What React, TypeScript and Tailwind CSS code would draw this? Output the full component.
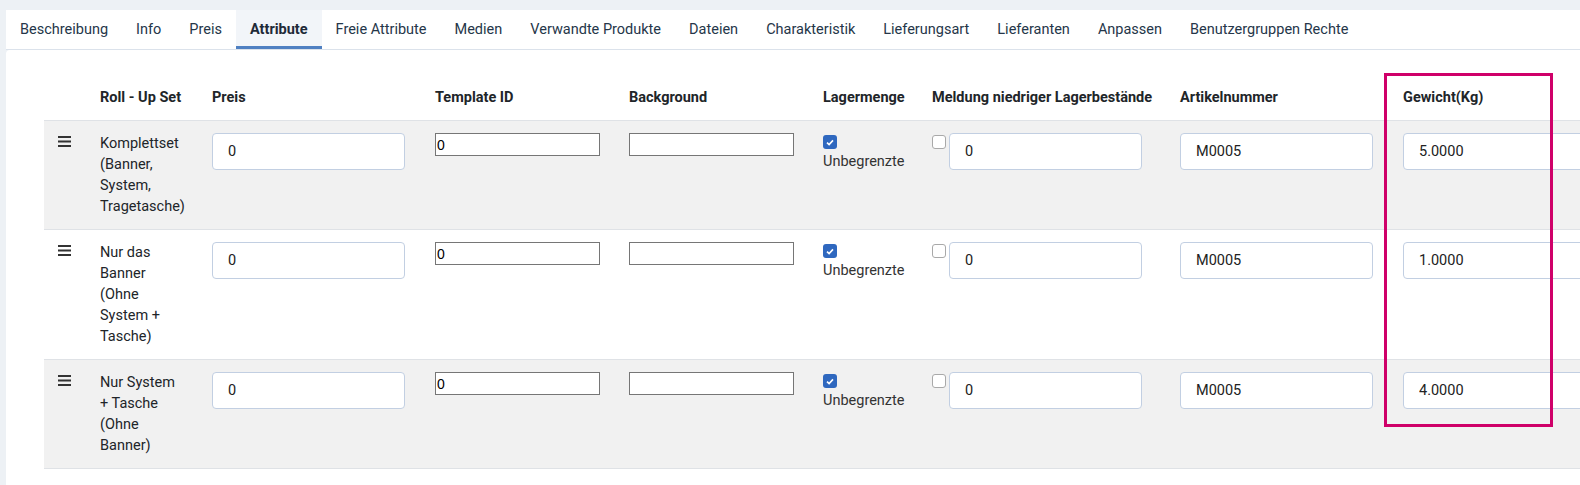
import React from "react";

type Variant = {
  id: number;
  name: string;
  weight: string;
};

const tabs = [
  "Beschreibung",
  "Info",
  "Preis",
  "Attribute",
  "Freie Attribute",
  "Medien",
  "Verwandte Produkte",
  "Dateien",
  "Charakteristik",
  "Lieferungsart",
  "Lieferanten",
  "Anpassen",
  "Benutzergruppen Rechte",
];

const variants: Variant[] = [
  { id: 1, name: "Komplettset (Banner, System, Tragetasche)", weight: "5.0000" },
  { id: 2, name: "Nur das Banner (Ohne System + Tasche)", weight: "1.0000" },
  { id: 3, name: "Nur System + Tasche (Ohne Banner)", weight: "4.0000" },
];

export default function App() {
  return (
    <div className="relative min-h-screen overflow-hidden bg-[#edf1f5] pt-[10px] pl-[6px] font-[Roboto,sans-serif] text-[14.5px] text-[#212529]">
      <nav className="flex h-[40px] w-[1600px] border-b border-[#dbe2eb] bg-white">
        {tabs.map((tab) => (
          <Tab key={tab} label={tab} active={tab === "Attribute"} />
        ))}
      </nav>

      <div className="h-[440px] w-[1640px] rounded-tl-[4px] bg-white pt-[25px] pl-[38px]">
        <table className="w-[1582px] table-fixed border-collapse">
          <colgroup>
            <col className="w-[56px]" />
            <col className="w-[112px]" />
            <col className="w-[223px]" />
            <col className="w-[194px]" />
            <col className="w-[194px]" />
            <col className="w-[109px]" />
            <col className="w-[248px]" />
            <col className="w-[223px]" />
            <col className="w-[223px]" />
          </colgroup>
          <thead>
            <tr className="text-left font-bold leading-[21px]">
              <th className="py-3" />
              <th className="py-3 whitespace-nowrap">Roll - Up Set</th>
              <th className="py-3">Preis</th>
              <th className="py-3">Template ID</th>
              <th className="py-3">Background</th>
              <th className="py-3">Lagermenge</th>
              <th className="py-3 whitespace-nowrap">Meldung niedriger Lagerbestände</th>
              <th className="py-3">Artikelnummer</th>
              <th className="py-3">Gewicht(Kg)</th>
            </tr>
          </thead>
          <tbody>
            {variants.map((v, i) => (
              <VariantRow key={v.id} variant={v} striped={i % 2 === 0} />
            ))}
          </tbody>
        </table>
      </div>

      {/* highlight around the weight column */}
      <div className="pointer-events-none absolute left-[1384px] top-[73px] h-[354px] w-[169px] border-[3px] border-[#cf0069]" />
    </div>
  );
}

function Tab({ label, active }: { label: string; active: boolean }) {
  return (
    <button
      type="button"
      className={`flex h-full items-center px-[14px] text-[14.5px] ${
        active
          ? "border-b-[3px] border-[#4f80c2] bg-[#f2f5f9] pt-[3px] font-bold text-[#1e2a38]"
          : "text-[#253649]"
      }`}
    >
      {label}
    </button>
  );
}

function VariantRow({ variant, striped }: { variant: Variant; striped: boolean }) {
  const cell = "border-y border-[#dfe2e6] py-3 align-top";
  return (
    <tr className={striped ? "bg-[#f1f1f1]" : "bg-white"}>
      <td className={`${cell} pl-[14px]`}>
        <svg width="13" height="11" viewBox="0 0 13 11" className="mt-[3px] text-[#333]">
          <rect x="0" y="0" width="13" height="2" fill="currentColor" />
          <rect x="0" y="4.5" width="13" height="2" fill="currentColor" />
          <rect x="0" y="9" width="13" height="2" fill="currentColor" />
        </svg>
      </td>
      <td className={cell}>
        <div className="w-[84px] leading-[21px]">{variant.name}</div>
      </td>
      <td className={cell}>
        <TextInput value="0" />
      </td>
      <td className={cell}>
        <PlainInput value="0" />
      </td>
      <td className={cell}>
        <PlainInput value="" />
      </td>
      <td className={cell}>
        <Checkbox checked className="mt-[2px]" />
        <div className="mt-[2px] leading-[21px] text-[#333]">Unbegrenzte</div>
      </td>
      <td className={cell}>
        <div className="flex items-start gap-[3px]">
          <Checkbox checked={false} className="mt-[2px]" />
          <TextInput value="0" />
        </div>
      </td>
      <td className={cell}>
        <TextInput value="M0005" />
      </td>
      <td className={cell}>
        <TextInput value={variant.weight} />
      </td>
    </tr>
  );
}

function TextInput({ value }: { value: string }) {
  return (
    <input
      type="text"
      readOnly
      defaultValue={value}
      className="block h-[37px] w-[193px] rounded-[4px] border border-[#c2cfe2] bg-white px-[15px] text-[14.5px] text-[#222] outline-none"
    />
  );
}

function PlainInput({ value }: { value: string }) {
  return (
    <input
      type="text"
      readOnly
      defaultValue={value}
      className="block h-[23px] w-[165px] border border-[#767676] bg-white px-[1px] font-['Liberation_Sans',Arial,sans-serif] text-[14px] text-black outline-none"
    />
  );
}

function Checkbox({ checked, className = "" }: { checked: boolean; className?: string }) {
  return checked ? (
    <span
      className={`flex h-[14px] w-[14px] items-center justify-center rounded-[3px] bg-[#2f68bf] ${className}`}
    >
      <svg width="8" height="7" viewBox="0 0 8 7">
        <path d="M1 3.6 L3.1 5.6 L7 1.4" stroke="white" strokeWidth="1.6" fill="none" />
      </svg>
    </span>
  ) : (
    <span
      className={`block h-[14px] w-[14px] shrink-0 rounded-[3px] border border-[#a9a9a9] bg-white ${className}`}
    />
  );
}
